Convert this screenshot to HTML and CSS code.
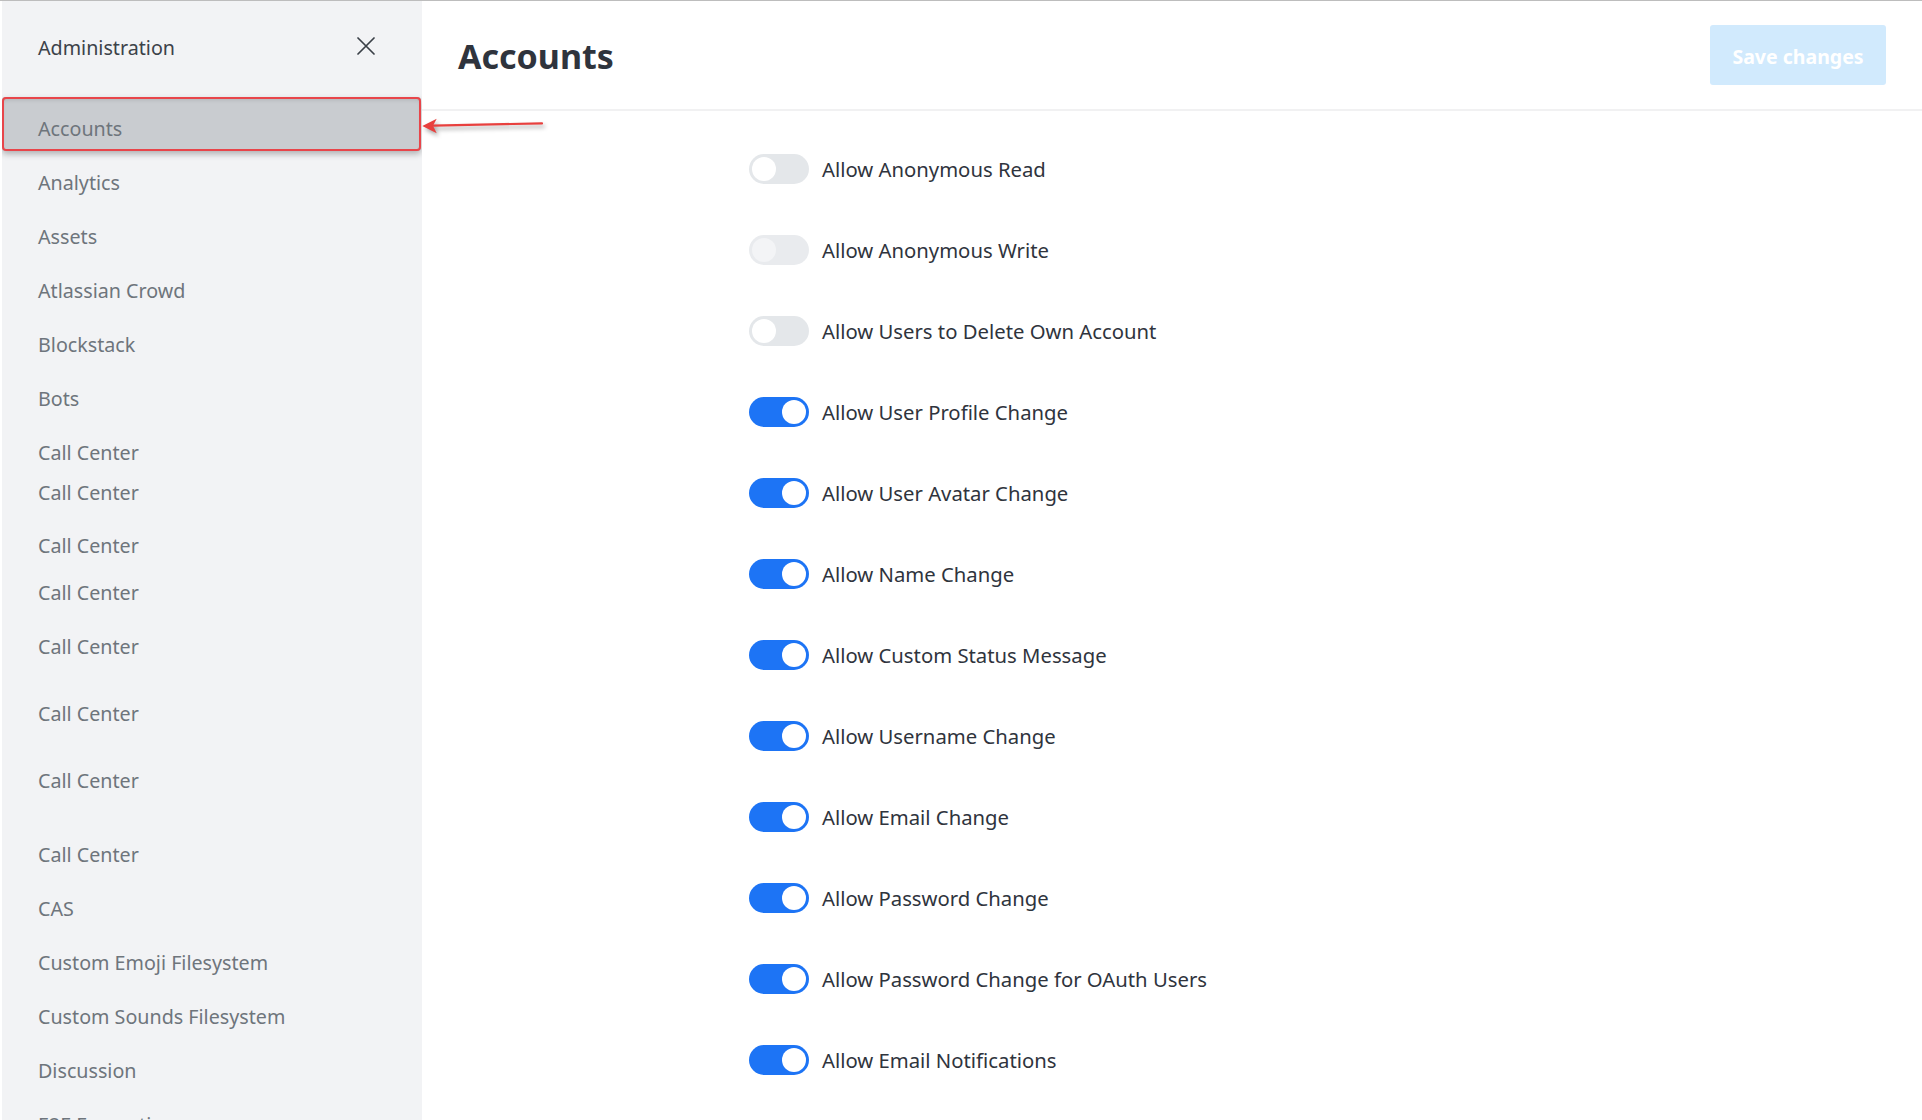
FILE: index.html
```html
<!DOCTYPE html>
<html lang="en">
<head>
<meta charset="utf-8">
<title>Administration - Accounts</title>
<link rel="stylesheet" href="styles.css">
</head>
<body>
<div class="app">
  <aside class="sidebar">
    <div class="sidebar-header">
      <span class="sidebar-title">Administration</span>
      <span class="close-btn" aria-label="Close">
        <svg width="18" height="18" viewBox="0 0 18 18"><path d="M1 1L17 17M17 1L1 17" stroke="#3a4047" stroke-width="1.7" fill="none" stroke-linecap="round"/></svg>
      </span>
    </div>
    <nav class="nav">
      <a class="nav-item is-active">Accounts</a>
      <a class="nav-item">Analytics</a>
      <a class="nav-item">Assets</a>
      <a class="nav-item">Atlassian Crowd</a>
      <a class="nav-item">Blockstack</a>
      <a class="nav-item">Bots</a>
      <a class="nav-item step-40">Call Center</a>
      <a class="nav-item step-53">Call Center</a>
      <a class="nav-item step-47">Call Center</a>
      <a class="nav-item">Call Center</a>
      <a class="nav-item step-67">Call Center</a>
      <a class="nav-item step-67">Call Center</a>
      <a class="nav-item step-74">Call Center</a>
      <a class="nav-item">Call Center</a>
      <a class="nav-item">CAS</a>
      <a class="nav-item">Custom Emoji Filesystem</a>
      <a class="nav-item">Custom Sounds Filesystem</a>
      <a class="nav-item">Discussion</a>
      <a class="nav-item">E2E Encryption</a>
    </nav>
  </aside>
  <main class="main">
    <header class="page-header">
      <h1 class="page-title">Accounts</h1>
      <button class="save-btn" disabled>Save changes</button>
    </header>
    <section class="settings">
      <div class="settings-list">
        <div class="setting-row"><span class="toggle"><span class="knob"></span></span><span class="setting-label">Allow Anonymous Read</span></div>
        <div class="setting-row"><span class="toggle is-disabled"><span class="knob"></span></span><span class="setting-label">Allow Anonymous Write</span></div>
        <div class="setting-row"><span class="toggle"><span class="knob"></span></span><span class="setting-label">Allow Users to Delete Own Account</span></div>
        <div class="setting-row"><span class="toggle is-on"><span class="knob"></span></span><span class="setting-label">Allow User Profile Change</span></div>
        <div class="setting-row"><span class="toggle is-on"><span class="knob"></span></span><span class="setting-label">Allow User Avatar Change</span></div>
        <div class="setting-row"><span class="toggle is-on"><span class="knob"></span></span><span class="setting-label">Allow Name Change</span></div>
        <div class="setting-row"><span class="toggle is-on"><span class="knob"></span></span><span class="setting-label">Allow Custom Status Message</span></div>
        <div class="setting-row"><span class="toggle is-on"><span class="knob"></span></span><span class="setting-label">Allow Username Change</span></div>
        <div class="setting-row"><span class="toggle is-on"><span class="knob"></span></span><span class="setting-label">Allow Email Change</span></div>
        <div class="setting-row"><span class="toggle is-on"><span class="knob"></span></span><span class="setting-label">Allow Password Change</span></div>
        <div class="setting-row"><span class="toggle is-on"><span class="knob"></span></span><span class="setting-label">Allow Password Change for OAuth Users</span></div>
        <div class="setting-row"><span class="toggle is-on"><span class="knob"></span></span><span class="setting-label">Allow Email Notifications</span></div>
      </div>
    </section>
  </main>
  <svg class="annotation-arrow" width="130" height="36" viewBox="0 0 130 36">
    <path d="M15 17.6 L124 15.4" stroke="#e8403e" stroke-width="2.2" fill="none" stroke-linecap="round"/>
    <path d="M4.3 18 L18.7 10.7 L15 17.7 L18.7 25.3 Z" fill="#e8403e"/>
  </svg>
</div>
</body>
</html>
```

FILE: styles.css
```css
html, body {
  margin: 0;
  padding: 0;
  height: 100%;
  overflow: hidden;
  background: #ffffff;
}

body {
  border-top: 1px solid #bdbdbd;
  box-sizing: border-box;
  font-family: "Noto Sans", "Open Sans", "Liberation Sans", sans-serif;
  color: #2f343d;
}

.app {
  position: relative;
  display: flex;
  height: 100%;
  padding-left: 2px;
  box-sizing: border-box;
}

/* Sidebar */
.sidebar {
  width: 420px;
  flex: 0 0 420px;
  background: #f2f3f5;
  height: 100%;
  overflow: hidden;
}

.sidebar-header {
  height: 96px;
  box-sizing: border-box;
  padding: 0 47px 3px 36px;
  display: flex;
  align-items: center;
  justify-content: space-between;
}

.sidebar-title {
  font-size: 19.7px;
  color: #3c4249;
}

.close-btn {
  display: flex;
  width: 18px;
  height: 18px;
  margin-top: -4px;
}

.nav {
  display: flex;
  flex-direction: column;
}

.nav-item {
  display: block;
  height: 54px;
  line-height: 56px;
  padding-left: 36px;
  font-size: 19.7px;
  color: #6e757c;
  white-space: nowrap;
  flex: 0 0 auto;
}

.nav-item.step-40 { height: 40px; }
.nav-item.step-47 { height: 47px; }
.nav-item.step-53 { height: 53px; }
.nav-item.step-67 { height: 67px; }
.nav-item.step-74 { height: 74px; }

.nav-item.is-active {
  position: relative;
  line-height: 64px;
  margin-bottom: 4px;
  margin-right: 1px;
  background: #c9ccd0;
  box-shadow: inset 0 3px 4px rgba(0, 0, 0, 0.12), 0 3px 6px rgba(0, 0, 0, 0.28);
  border-radius: 4px;
}

.nav-item.is-active::after {
  content: "";
  position: absolute;
  inset: 0;
  border: 2px solid #e8454a;
  border-radius: 4px;
}

/* Main */
.main {
  flex: 1 1 auto;
  min-width: 0;
  display: flex;
  flex-direction: column;
}

.page-header {
  height: 110px;
  box-sizing: border-box;
  border-bottom: 2px solid #f1f1f2;
  display: flex;
  align-items: center;
  justify-content: space-between;
  padding: 2px 36px 0 36px;
}

.page-title {
  margin: 0;
  font-size: 34px;
  font-weight: 700;
  color: #2f343d;
}

.save-btn {
  height: 60px;
  width: 176px;
  margin-top: -3px;
  padding: 4px 0 0;
  border: 0;
  border-radius: 3px;
  background: #d1eafd;
  color: #ffffff;
  font-family: inherit;
  font-size: 19.5px;
  font-weight: 700;
}

.settings-list {
  width: 846px;
  margin: 0 auto;
  padding-top: 17px;
  display: flex;
  flex-direction: column;
}

.setting-row {
  height: 81px;
  display: flex;
  align-items: center;
  gap: 13px;
}

.setting-label {
  font-size: 20.3px;
  color: #2f343d;
}

.toggle {
  position: relative;
  width: 60px;
  height: 30px;
  flex: 0 0 60px;
  border-radius: 15px;
  background: #e4e7ea;
  box-sizing: border-box;
  padding: 3px;
  display: flex;
  justify-content: flex-start;
}

.toggle .knob {
  width: 24px;
  height: 24px;
  border-radius: 50%;
  background: #ffffff;
}

.toggle.is-disabled {
  background: #e9ebee;
}

.toggle.is-disabled .knob {
  background: #f3f4f6;
}

.toggle.is-on {
  background: #1d74f5;
  justify-content: flex-end;
}

/* Annotation overlay */
.annotation-arrow {
  position: absolute;
  left: 418px;
  top: 107px;
  filter: drop-shadow(2px 3px 2px rgba(0, 0, 0, 0.35));
}
```
